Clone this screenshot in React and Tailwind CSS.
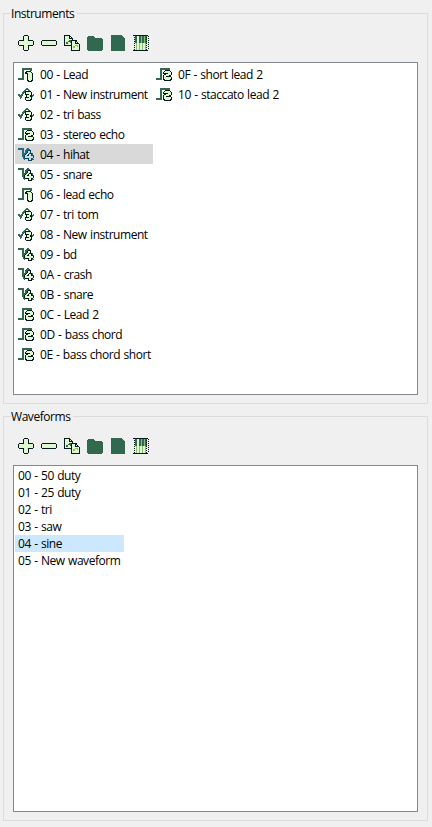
import React from "react";

const COLORS = { g: "#306850", k: "#071821", l: "#e0f8cf", m: "#86c06c" };
const SELECTED = { g: "#246a7c", k: "#10405f", l: "#c3e0df", m: "#86c06c" };

const ICONS = {
  plus: [
    "......kkkk......",
    ".....kllllk.....",
    ".....kllllk.....",
    ".....kllllk.....",
    ".....kllllk.....",
    ".kkkkkllllkkkkk.",
    "kllllllllllllllk",
    "kllllllllllllllk",
    "kllllllllllllllk",
    "kllllllllllllllk",
    ".kkkkkllllkkkkk.",
    ".....kllllk.....",
    ".....kllllk.....",
    ".....kllllk.....",
    ".....kllllk.....",
    "......kkkk......",
  ],
  minus: [
    "", "", "", "", "",
    ".kkkkkkkkkkkkkk.",
    "kllllllllllllllk",
    "kllllllllllllllk",
    "kllllllllllllllk",
    "kllllllllllllllk",
    ".kkkkkkkkkkkkkk.",
  ],
  copy: [
    "kkkkkk..........",
    "kllllkk.........",
    "kllllklk........",
    "kllllkkkk.......",
    "klllllllk.......",
    "kllllggkkkkkk...",
    "klllgggklllkk...",
    "klggllgklllklk..",
    "klgglllklllkkkk.",
    "kllllllklllllllk",
    "kkkkkkkklllmmmlk",
    ".......klmmllmlk",
    ".......klmmllllk",
    ".......klllllllk",
    ".......klllllllk",
    ".......kkkkkkkkk",
  ],
  folder: [
    "",
    ".gggggg.........",
    "gggggggg........",
    "ggggggggggggggg.",
    "gggggggggggggggg",
    "gggggggggggggggg",
    "gggggggggggggggg",
    "gggggggggggggggg",
    "gggggggggggggggg",
    "gggggggggggggggg",
    "gggggggggggggggg",
    "gggggggggggggggg",
    "gggggggggggggggg",
    "gggggggggggggggg",
    "gggggggggggggggg",
    ".gggggggggggggg.",
  ],
  file: [
    ".ggggggggggg....",
    ".gggggggggggg...",
    ".ggggggggggggg..",
    ".gggggggggggggg.",
    ".gggggggggggggg.",
    ".gggggggggggggg.",
    ".gggggggggggggg.",
    ".gggggggggggggg.",
    ".gggggggggggggg.",
    ".gggggggggggggg.",
    ".gggggggggggggg.",
    ".gggggggggggggg.",
    ".gggggggggggggg.",
    ".gggggggggggggg.",
    ".gggggggggggggg.",
    ".gggggggggggggg.",
  ],
  piano: [
    "kkkkkkkkkkkkkkk.",
    "..ggllggmggmgg.k",
    ".kggllggmggmgk..",
    "..ggllggmggmgg.k",
    ".kggllggmggmgk..",
    "..ggllggmggmgg.k",
    ".kggllggmggmgk..",
    "..ggllggmggmgg.k",
    ".klmllmllmllmk..",
    "..lmllmllmllml.k",
    ".klmllmllmllmk..",
    "..lmllmllmllml.k",
    ".klmllmllmllmk..",
    "..lmllmllmllml.k",
    ".klmllmllmllmk..",
    "kkkkkkkkkkkkkkk.",
  ],
  one: [
    "", "",
    "....gggggggggg..",
    "....gggggggggg..",
    "....gg......gg..",
    "....gg..kkkkk...",
    "....gg.kkllllk..",
    "....gg.kkkllllk.",
    "....gg...kllllk.",
    "....gg...kllllk.",
    "....gg...kllllk.",
    "....gg...kllllk.",
    "gggggg...kllllk.",
    "gggggg...kllllk.",
    ".........kkllkk.",
    "..........kkkk..",
  ],
  two: [
    "", "",
    "....gggggggggg..",
    "....gggggggggg..",
    "....gg...kkkkk..",
    "....gg..klllllk.",
    "....gg.klllllllk",
    "....gg.kkkkklllk",
    "....gg..kklllllk",
    "....gg.klllllkk.",
    "....gg.kllkkkkk.",
    "....gg.klllllllk",
    "gggggg.klllllllk",
    "gggggg.kklllllkk",
    "........kkkkkkk.",
    "",
  ],
  three: [
    "", "",
    "........gg......",
    ".......gggg.....",
    "......gg..gg....",
    ".....ggkkkkkk...",
    "....gggklllllk..",
    "....gg.klllllk..",
    "gg.gg..kkkkllk.g",
    "ggggg...klllkkgg",
    ".ggg....klllkkg.",
    "..gg...kkkkllk..",
    "..g....klllllk..",
    ".......kllllkk..",
    "........kkkkk...",
    "",
  ],
  four: [
    "", "",
    "gggggg...gg.....",
    "gggggg..gggg....",
    "....gg.gggkkk...",
    "....gg.ggkllk...",
    "....gg.ggkllk...",
    "....ggggkllkkkg.",
    "....gggkllkllkg.",
    "....ggkllkkllkkg",
    "....ggkllllllllk",
    ".....gkllllllllk",
    ".....ggkkkkllkk.",
    "......g...kllkgg",
    "..........kkkk..",
    "",
  ],
};

function PixelIcon({ name, selected = false }) {
  const palette = selected ? SELECTED : COLORS;
  return (
    <svg width="16" height="16" viewBox="0 0 16 16" shapeRendering="crispEdges" className="block shrink-0">
      {ICONS[name].flatMap((row, y) =>
        [...row].map((c, x) =>
          c === "." ? null : <rect key={`${x}-${y}`} x={x} y={y} width="1" height="1" fill={palette[c]} />
        )
      )}
    </svg>
  );
}

const INSTRUMENTS = [
  [
    ["one", "00 - Lead"],
    ["three", "01 - New instrument"],
    ["three", "02 - tri bass"],
    ["two", "03 - stereo echo"],
    ["four", "04 - hihat"],
    ["four", "05 - snare"],
    ["one", "06 - lead echo"],
    ["three", "07 - tri tom"],
    ["three", "08 - New instrument"],
    ["four", "09 - bd"],
    ["four", "0A - crash"],
    ["four", "0B - snare"],
    ["two", "0C - Lead 2"],
    ["two", "0D - bass chord"],
    ["two", "0E - bass chord short"],
  ],
  [
    ["two", "0F - short lead 2"],
    ["two", "10 - staccato lead 2"],
  ],
];

const WAVEFORMS = ["00 - 50 duty", "01 - 25 duty", "02 - tri", "03 - saw", "04 - sine", "05 - New waveform"];

function Group({ title, className, children }) {
  return (
    <section className={`relative flex flex-col border border-[#dcdcdc] px-[9px] pb-[8px] ${className}`}>
      <span className="absolute -top-[8px] left-[7px] h-4 bg-[#f0f0f0] pr-[3px] leading-4 whitespace-nowrap">{title}</span>
      <div className="flex gap-[7px] pl-[5px] pt-[21px] pb-[11px]">
        {["plus", "minus", "copy", "folder", "file", "piano"].map((n) => (
          <PixelIcon key={n} name={n} />
        ))}
      </div>
      <div className="flex min-h-0 flex-1 items-start border border-[#828790] bg-white p-px">{children}</div>
    </section>
  );
}

export default function App() {
  return (
    <div className="flex h-[827px] w-[432px] flex-col gap-[12px] overflow-hidden bg-[#f0f0f0] pl-[3px] pr-[4px] pt-[13px] font-['Open_Sans','Noto_Sans',sans-serif] text-[12px] tracking-[-0.45px] [word-spacing:0.7px] text-black">
      <Group title="Instruments" className="h-[391px]">
        {INSTRUMENTS.map((column, i) => (
          <div key={i} className="w-[138px]">
            {column.map(([icon, label]) => {
              const selected = label === "04 - hihat";
              return (
                <div key={label} className={`flex h-5 items-center gap-[6px] pl-[3px] whitespace-nowrap ${selected ? "bg-[#d9d9d9]" : ""}`}>
                  <PixelIcon name={icon} selected={selected} />
                  <span className="pt-px leading-[18px]">{label}</span>
                </div>
              );
            })}
          </div>
        ))}
      </Group>
      <Group title="Waveforms" className="h-[405px]">
        <div className="w-[109px]">
          {WAVEFORMS.map((label) => (
            <div key={label} className={`h-[17px] pl-[3px] leading-[17px] whitespace-nowrap ${label === "04 - sine" ? "bg-[#cce8ff]" : ""}`}>
              {label}
            </div>
          ))}
        </div>
      </Group>
    </div>
  );
}
